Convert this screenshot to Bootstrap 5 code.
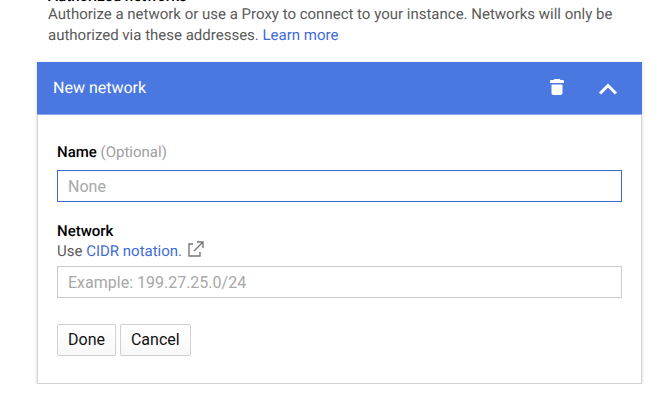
<!DOCTYPE html>
<html lang="en">
<head>
<meta charset="utf-8">
<meta name="viewport" content="width=device-width, initial-scale=1">
<title>Authorized networks</title>
<link href="https://cdn.jsdelivr.net/npm/bootstrap@5.3.0/dist/css/bootstrap.min.css" rel="stylesheet">
<style>
body{font-family:Roboto,"Liberation Sans",sans-serif;font-size:15px;line-height:20px;color:#5a5a5a;background:#fff;overflow:hidden;text-rendering:geometricPrecision}
a{color:#3f6bd8;text-decoration:none}
.page{padding:0 8px 0 37px;margin-top:-12px}
.intro{padding:0 11px;margin-bottom:16px}
.intro h2,.field-label{font-size:15px;line-height:20px;font-weight:500;color:#000;margin:0}
.intro h2{line-height:16px}
.intro p{line-height:21px}
.panel{border:1px solid #d2d2d2;border-radius:0;box-shadow:0 1px 4px rgba(0,0,0,.15)}
.panel-head{margin:-1px -1px 0;height:53px;background:#4a78e0;color:#fff;padding:0 22px 0 16px;border-bottom:1px solid #8ba9ea}
.panel-head h3{font-size:16px;line-height:20px;font-weight:400}
.tool{background:none;border:0;padding:0;color:#fff;display:flex}
.tool-delete{margin-right:27px}
.panel-body{padding:27px 19px}
.field-row{margin-bottom:19px}
.field-row-last{margin-bottom:26px}
.field-help{margin-bottom:6px;height:19px}
.field{border:1px solid #cbcbcb;border-radius:0;height:32px;font-size:16px;padding:0 10px;color:#333}
.field::placeholder{color:#a8a8a8;opacity:1}
.field.active{border-color:#4169d0}
.hint{color:#a0a0a0}
.ext{margin-left:6px}
.act{height:32px;padding:0 10px;font-size:16px;line-height:20px;border:1px solid #d0d0d0;border-radius:2px;background:linear-gradient(#fff,#f8f8f8);color:#111}
</style>
<script src="https://cdn.jsdelivr.net/npm/bootstrap@5.3.0/dist/js/bootstrap.bundle.min.js"></script>
</head>
<body>
<main class="page">
<section class="intro">
<h2>Authorized networks</h2>
<p class="mb-0">Authorize a network or use a Proxy to connect to your instance. Networks will only be authorized via these addresses. <a href="#">Learn more</a></p>
</section>
<form class="card panel">
<div class="panel-head d-flex align-items-center">
<h3 class="mb-0 me-auto">New network</h3>
<button type="button" class="tool tool-delete" aria-label="Delete"><svg width="24" height="24" viewBox="0 0 24 24" fill="currentColor"><path d="M6.500 8.500h11v8.500a2 2 0 0 1-2 2h-7a2 2 0 0 1-2-2zM9.500 3h5l1 1H18a1 1 0 0 1 1 1v2H5V5a1 1 0 0 1 1-1h2.500z"/></svg></button>
<button type="button" class="tool" aria-label="Collapse"><svg width="24" height="24" viewBox="0 0 24 24" fill="none" stroke="currentColor" stroke-width="3"><path d="M4 17.500l8-8 8 8"/></svg></button>
</div>
<div class="panel-body">
<div class="field-row">
<label for="name" class="mb-2"><span class="field-label">Name</span> <span class="hint">(Optional)</span></label>
<input type="text" id="name" class="form-control field active" placeholder="None">
</div>
<div class="field-row-last">
<label for="net" class="field-label d-block">Network</label>
<div class="field-help d-flex align-items-center"><span>Use <a href="#">CIDR notation.</a></span>
<svg class="ext mb-1" width="16" height="16" viewBox="0 0 16 16" fill="none" stroke="#777" stroke-width="1.400"><path d="M5 3H1v12h11v-4M9 1h6v6M15 1L6 10"/></svg></div>
<input type="text" id="net" class="form-control field" placeholder="Example: 199.27.25.0/24">
</div>
<div class="d-flex gap-1"><button type="button" class="btn act">Done</button><button type="button" class="btn act">Cancel</button></div>
</div>
</form>
</main>
</body>
</html>
